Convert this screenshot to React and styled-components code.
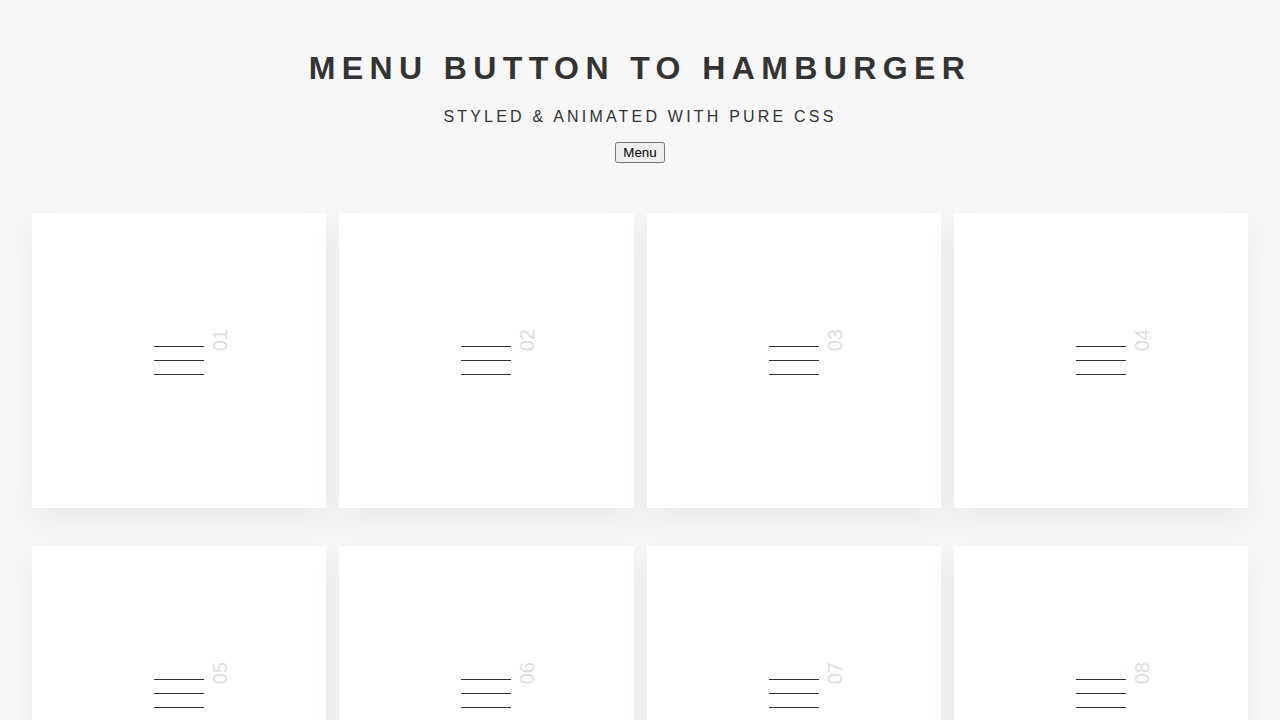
import React from 'react';
import styled, { createGlobalStyle } from 'styled-components';

const GlobalStyle = createGlobalStyle`
  html, body {
    margin: 0;
    padding: 0;
    background: #f7f7f7;
    font-family: "Liberation Sans", Arial, sans-serif;
    color: #333;
  }
`;

const Page = styled.div`
  min-height: 100vh;
`;

const Header = styled.header`
  padding-top: 50px;
  display: flex;
  flex-direction: column;
  align-items: center;
  text-align: center;
`;

const Title = styled.h1`
  margin: 0;
  font-size: 32px;
  font-weight: bold;
  letter-spacing: 0.2em;
  text-transform: uppercase;
  color: #333;
`;

const Subtitle = styled.p`
  margin: 21px 0 0;
  font-size: 16px;
  letter-spacing: 0.2em;
  text-transform: uppercase;
  color: #333;
`;

const MenuButton = styled.button`
  margin-top: 16px;
  font-family: "Liberation Sans", Arial, sans-serif;
  font-size: 13.33px;
`;

const Grid = styled.div`
  display: grid;
  grid-template-columns: repeat(4, 1fr);
  gap: 38px 13px;
  padding: 50px 32px 40px;
`;

const Card = styled.div`
  aspect-ratio: 294 / 295;
  background: #fff;
  box-shadow: 0 12px 30px rgba(0, 0, 0, 0.06);
  display: flex;
  align-items: center;
  justify-content: center;
`;

const Burger = styled.div`
  position: relative;
  width: 50px;
  display: flex;
  flex-direction: column;
  gap: 13px;
`;

const Line = styled.span`
  display: block;
  height: 1px;
  background: #333;
`;

const Number = styled.span`
  position: absolute;
  left: calc(100% + 5px);
  bottom: calc(100% - 5px);
  font-size: 20px;
  line-height: 23px;
  color: #ddd;
  writing-mode: vertical-rl;
  transform: rotate(180deg);
`;

const items = ['01', '02', '03', '04', '05', '06', '07', '08'];

export default function App() {
  return (
    <Page>
      <GlobalStyle />
      <Header>
        <Title>Menu Button to Hamburger</Title>
        <Subtitle>Styled &amp; Animated with pure CSS</Subtitle>
        <MenuButton>Menu</MenuButton>
      </Header>
      <Grid>
        {items.map((n) => (
          <Card key={n}>
            <Burger>
              <Line />
              <Line />
              <Line />
              <Number>{n}</Number>
            </Burger>
          </Card>
        ))}
      </Grid>
    </Page>
  );
}
